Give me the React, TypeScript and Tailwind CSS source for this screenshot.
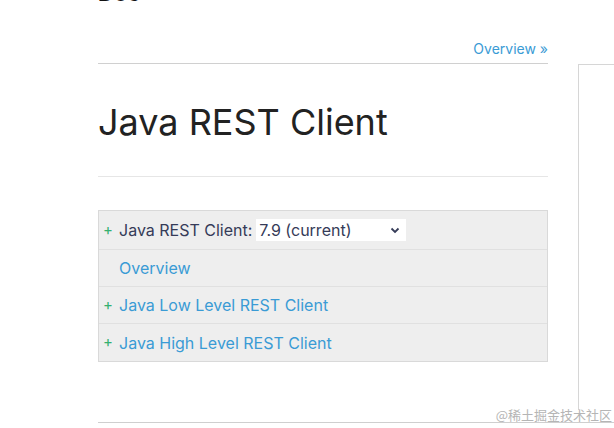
import React from "react";

const font = { fontFamily: "Inter, 'Noto Sans', sans-serif" };

export default function App() {
  return (
    <div className="relative w-[614px] h-[428px] overflow-hidden bg-white" style={font}>
      <div className="flex pl-[98px]">
        <div className="w-[450px] shrink-0">
          <div className="h-[4px] overflow-hidden">
            <div className="-mt-[18px] text-[22px] font-bold leading-[22px] text-[#111]">Doc</div>
          </div>
          <div className="h-[60px] border-b border-[#d0d0d0] flex items-end justify-end pb-[6px]">
            <span className="text-[14px] leading-[17px] text-[#3a9bd5]">Overview »</span>
          </div>
          <div className="h-[113px] border-b border-[#e6e6e6] pt-[36px]">
            <h1 className="text-[36px] leading-[44px] text-[#222]">Java REST Client</h1>
          </div>
          <div className="mt-[33px] border border-[#d9d9d9] bg-[#eeeeee] text-[16px]">
            <div className="h-[39px] flex items-center border-b border-[#e0e0e0]">
              <span className="w-[20px] pl-[4px] text-[#34b070] text-[15px]">+</span>
              <span className="text-[#353b58]">Java REST Client:</span>
              <div className="ml-[4px] w-[150px] h-[22px] bg-white flex items-center justify-between pl-[3px] pr-[6px] text-[#353b58]">
                <span>7.9 (current)</span>
                <svg width="10" height="7" viewBox="0 0 10 7">
                  <path d="M1.5 1.5 L5 5 L8.5 1.5" stroke="#353b58" strokeWidth="1.8" fill="none" />
                </svg>
              </div>
            </div>
            <div className="h-[37px] flex items-center border-b border-[#e0e0e0]">
              <span className="w-[20px]" />
              <span className="text-[#3a9bd5]">Overview</span>
            </div>
            <div className="h-[37px] flex items-center border-b border-[#e0e0e0]">
              <span className="w-[20px] pl-[4px] text-[#34b070] text-[15px]">+</span>
              <span className="text-[#3a9bd5]">Java Low Level REST Client</span>
            </div>
            <div className="h-[37px] flex items-center">
              <span className="w-[20px] pl-[4px] text-[#34b070] text-[15px]">+</span>
              <span className="text-[#3a9bd5]">Java High Level REST Client</span>
            </div>
          </div>
        </div>
        <div className="ml-[30px] mt-[64px] flex-1 h-[346px] border-l border-t border-[#d6d6d6]" />
      </div>
      <div className="ml-[98px] mt-[12px] border-t border-[#cfcfcf]" />
      <div
        className="absolute right-[2px] top-[405px] text-[13px] text-[#b5b5b5]"
        style={{ fontFamily: "'Noto Sans CJK SC', sans-serif" }}
      >
        @稀土掘金技术社区
      </div>
    </div>
  );
}
